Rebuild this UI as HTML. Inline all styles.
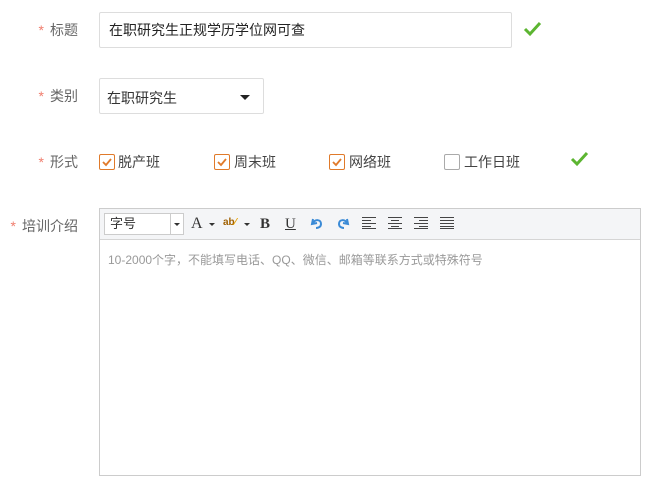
<!DOCTYPE html>
<html><head><meta charset="utf-8"><style>
*{margin:0;padding:0;box-sizing:border-box}
body{width:666px;height:485px;background:#fff;font-family:"Liberation Sans","Noto Sans CJK SC",sans-serif;font-size:14px;color:#333;position:relative;overflow:hidden}
.a{position:absolute}
.lbl{position:absolute;right:588px;color:#666;white-space:nowrap;line-height:20px}
.lbl b{color:#f07c6c;font-weight:normal;margin-right:6px}
.cb{position:absolute;width:16px;height:16px;border:1px solid #e07a2a;border-radius:2px;top:154px}
.cb.off{border-color:#aaa}
.cbt{position:absolute;top:152px;line-height:20px;color:#444}
.tb{position:absolute;top:214px;line-height:20px;color:#333}
</style></head><body>
<div class="lbl" style="top:20px"><b>*</b>标题</div>
<div class="a" style="left:99px;top:12px;width:413px;height:36px;border:1px solid #ddd;border-radius:2px;padding-left:9px;line-height:34px;color:#222">在职研究生正规学历学位网可查</div>
<svg class="a" style="left:523px;top:20px" width="20" height="18"><path d="M2 9 L7 14 L17 3" stroke="#5cb531" stroke-width="3" fill="none"/></svg>

<div class="lbl" style="top:86px"><b>*</b>类别</div>
<div class="a" style="left:99px;top:78px;width:165px;height:36px;border:1px solid #ddd;border-radius:2px;padding-left:7px;line-height:38px;color:#333">在职研究生</div>
<div class="a" style="left:240px;top:95px;border-left:5px solid transparent;border-right:5px solid transparent;border-top:5px solid #222"></div>

<div class="lbl" style="top:152px"><b>*</b>形式</div>
<div class="cb" style="left:99px"><svg width="14" height="14" style="position:absolute;left:0;top:0"><path d="M3 7 L6 10 L11 4" stroke="#e07a2a" stroke-width="1.8" fill="none"/></svg></div>
<div class="cbt" style="left:118px">脱产班</div>
<div class="cb" style="left:214px"><svg width="14" height="14" style="position:absolute;left:0;top:0"><path d="M3 7 L6 10 L11 4" stroke="#e07a2a" stroke-width="1.8" fill="none"/></svg></div>
<div class="cbt" style="left:234px">周末班</div>
<div class="cb" style="left:329px"><svg width="14" height="14" style="position:absolute;left:0;top:0"><path d="M3 7 L6 10 L11 4" stroke="#e07a2a" stroke-width="1.8" fill="none"/></svg></div>
<div class="cbt" style="left:349px">网络班</div>
<div class="cb off" style="left:444px"></div>
<div class="cbt" style="left:464px">工作日班</div>
<svg class="a" style="left:570px;top:150px" width="20" height="18"><path d="M2 9 L7 14 L17 3" stroke="#5cb531" stroke-width="3" fill="none"/></svg>

<div class="lbl" style="top:216px"><b>*</b>培训介绍</div>
<div class="a" style="left:99px;top:208px;width:542px;height:268px;border:1px solid #ccc"></div>
<div class="a" style="left:100px;top:209px;width:540px;height:31px;background:#f4f5f7;border-bottom:1px solid #d5d5d5"></div>
<div class="a" style="left:104px;top:213px;width:80px;height:22px;border:1px solid #ccc;background:#fff;font-size:13px;line-height:20px;padding-left:5px">字号</div>
<div class="a" style="left:170px;top:213px;width:1px;height:22px;background:#ccc"></div>
<div class="a" style="left:174px;top:223px;border-left:3px solid transparent;border-right:3px solid transparent;border-top:3px solid #333"></div>
<div class="tb" style="left:191px;font-family:'Liberation Serif',serif;font-size:16px">A</div>
<div class="a" style="left:209px;top:223px;border-left:3px solid transparent;border-right:3px solid transparent;border-top:3px solid #333"></div>
<div class="tb" style="left:223px;font-size:10px;color:#a06000;font-weight:bold;top:213px">ab<span style="color:#e8a000">⁄</span></div>
<div class="a" style="left:244px;top:223px;border-left:3px solid transparent;border-right:3px solid transparent;border-top:3px solid #333"></div>
<div class="tb" style="left:260px;font-family:'Liberation Serif',serif;font-weight:bold;font-size:15px">B</div>
<div class="tb" style="left:285px;font-family:'Liberation Serif',serif;text-decoration:underline;font-size:15px">U</div>
<svg class="a" style="left:309px;top:216px" width="16" height="14"><path d="M4 3 L3 8 L8 7 M3.5 7.5 C6 3 12 3 12 8 C12 11 9 12 7 12" stroke="#3a8ad6" stroke-width="2" fill="none"/></svg>
<svg class="a" style="left:335px;top:216px" width="16" height="14"><path d="M12 3 L13 8 L8 7 M12.5 7.5 C10 3 4 3 4 8 C4 11 7 12 9 12" stroke="#3a8ad6" stroke-width="2" fill="none"/></svg>
<svg class="a" style="left:362px;top:217px" width="14" height="12"><path d="M0 .5H14M0 3.5H9M0 6.5H14M0 9.5H9M0 11.5H14" stroke="#444"/></svg>
<svg class="a" style="left:388px;top:217px" width="14" height="12"><path d="M0 .5H14M3 3.5H11M0 6.5H14M3 9.5H11M0 11.5H14" stroke="#444"/></svg>
<svg class="a" style="left:414px;top:217px" width="14" height="12"><path d="M0 .5H14M5 3.5H14M0 6.5H14M5 9.5H14M0 11.5H14" stroke="#444"/></svg>
<svg class="a" style="left:440px;top:217px" width="14" height="12"><path d="M0 .5H14M0 3.5H14M0 6.5H14M0 9.5H14M0 11.5H14" stroke="#444"/></svg>
<div class="a" style="left:108px;top:251px;font-size:12px;color:#999;line-height:18px">10-2000个字，不能填写电话、QQ、微信、邮箱等联系方式或特殊符号</div>
</body></html>
